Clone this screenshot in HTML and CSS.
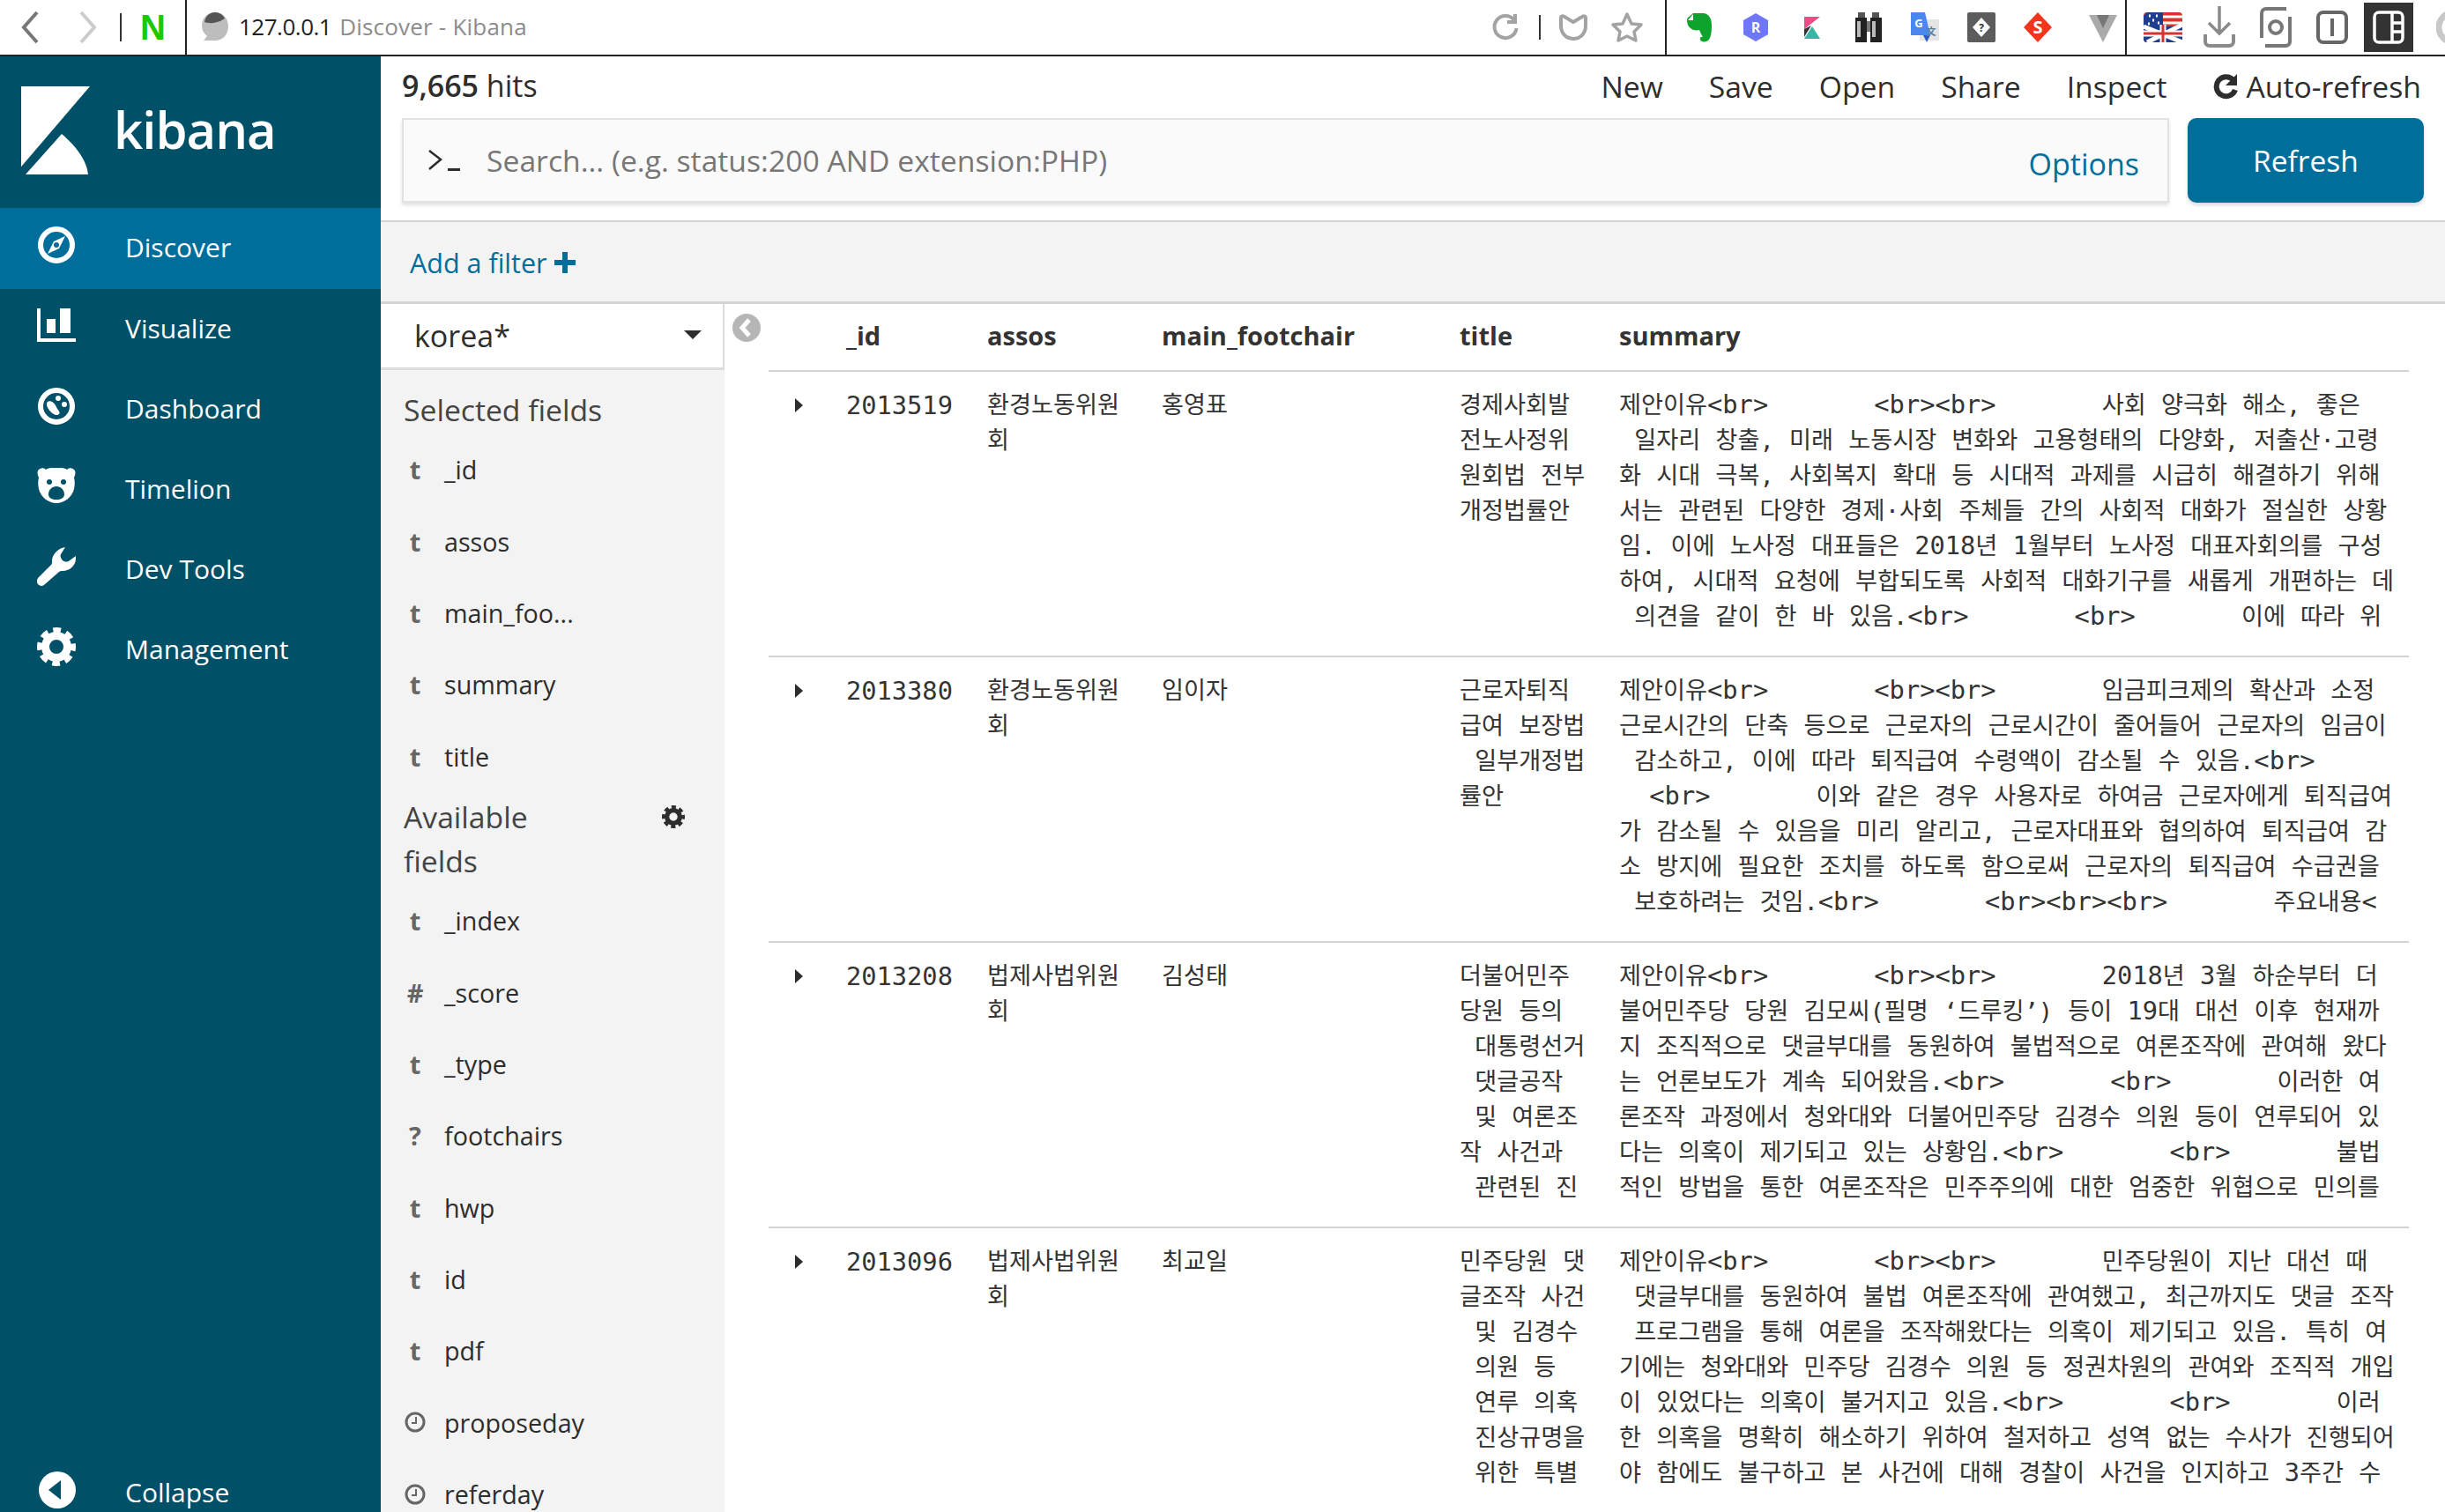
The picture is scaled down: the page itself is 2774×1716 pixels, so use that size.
FILE: index.html
```html
<!DOCTYPE html>
<html lang="en">
<head>
  <meta charset="UTF-8" />
  <title>Discover - Kibana</title>
  <link rel="stylesheet" href="styles.css">
</head>
<body>

<svg class="defs" width="0" height="0">
  <symbol id="gear" viewBox="0 0 44 44">
    <circle cx="22" cy="22" r="12.5" fill="none" stroke="currentColor" stroke-width="9"/>
    <circle cx="22" cy="22" r="18.5" fill="none" stroke="currentColor" stroke-width="7" stroke-dasharray="8.5 6" stroke-dashoffset="4"/>
  </symbol>
  <symbol id="clock" viewBox="0 0 24 24">
    <circle cx="12" cy="12" r="10" fill="none" stroke="currentColor" stroke-width="3"/>
    <path d="M13 6v7H8" fill="none" stroke="currentColor" stroke-width="2"/>
  </symbol>
</svg>

<!-- browser toolbar -->
<div class="toolbar">
  <div class="tb-nav">
    <svg class="tb-back" width="24" height="40" viewBox="0 0 24 40"><path d="M20 3L5 20l15 17" fill="none" stroke="#777" stroke-width="4"/></svg>
    <svg class="tb-fwd" width="24" height="40" viewBox="0 0 24 40"><path d="M4 3l15 17L4 37" fill="none" stroke="#ccc" stroke-width="4"/></svg>
    <span class="tb-sep"></span>
    <span class="tb-naver">N</span>
  </div>
  <div class="tb-tab">
    <svg width="34" height="34" viewBox="0 0 34 34"><path d="M17 1c9 0 15 7 15 16s-6 16-15 16H4l4-5C4 25 2 21 2 16 2 8 8 1 17 1z" fill="#bdbdbd"/><path d="M17 1C10 1 6 6 5 12c5 2 14 2 23-4-2-4-6-7-11-7z" fill="#555"/></svg>
    <span class="tb-host">127.0.0.1</span>
    <span class="tb-title">Discover - Kibana</span>
  </div>
  <div class="tb-actions">
    <svg width="36" height="36" viewBox="0 0 36 36"><path d="M28 10A12.5 12.5 0 1 0 30.500 19" fill="none" stroke="#a3a3a3" stroke-width="4"/><path d="M29 3v9h-9" fill="none" stroke="#a3a3a3" stroke-width="4"/></svg>
    <span class="tb-sep small"></span>
    <svg width="34" height="30" viewBox="0 0 34 30"><path d="M3 4c0-2 2-2 4-1l10 6 10-6c2-1 4-1 4 1v9c0 9-6 15-14 15S3 22 3 13z" fill="none" stroke="#a3a3a3" stroke-width="4" stroke-linejoin="round"/></svg>
    <svg class="tb-star" width="38" height="36" viewBox="0 0 38 36"><polygon points="19,3 24,14 35,15 27,23 29,33 19,28 9,33 11,23 3,15 14,14" fill="none" stroke="#a3a3a3" stroke-width="3.500" stroke-linejoin="round"/></svg>
  </div>
  <div class="tb-exts">
    <span class="slot"><svg width="30" height="34" viewBox="0 0 30 34"><path d="M8 1h12c6 1 9 6 9 14 0 8-1 14-4 17-3 2-8 2-9-1-1-2 1-4 3-3-2-3-3-6-4-8-4 1-8 0-10-2-3-2-4-6-4-9 0-1 0-2 1-3z" fill="#0da32c"/><path d="M8 2v7H2z" fill="#fff"/></svg></span>
    <span class="slot"><svg width="30" height="34" viewBox="0 0 30 34"><polygon points="15,1 29,9 29,25 15,33 1,25 1,9" fill="#6f76f8"/><text x="15" y="23" class="svg-label" fill="#fff" font-size="16">R</text></svg></span>
    <span class="slot"><svg width="20" height="26" viewBox="0 0 20 26"><polygon points="1,1 19,1 1,15" fill="#ec4b87"/><polygon points="1,15 9,11 1,24" fill="#333"/><polygon points="1,26 10,12 19,26" fill="#37b5a6"/></svg></span>
    <span class="slot"><svg width="32" height="34" viewBox="0 0 32 34"><rect x="1" y="6" width="13" height="28" fill="#222"/><rect x="18" y="6" width="13" height="28" fill="#222"/><rect x="4" y="0" width="8" height="6" fill="#555"/><rect x="20" y="0" width="8" height="6" fill="#555"/><rect x="3" y="10" width="4" height="18" fill="#bbb"/><rect x="20" y="10" width="4" height="18" fill="#bbb"/><rect x="14" y="10" width="4" height="12" fill="#777"/></svg></span>
    <span class="slot"><svg width="32" height="34" viewBox="0 0 32 34"><rect x="10" y="8" width="22" height="24" rx="1" fill="#e4e4e4"/><path d="M0 0h16l6 26H0z" fill="#4a87ee"/><polygon points="14,26 22,26 18,34" fill="#2b5fc0"/><text x="9" y="17" class="svg-label" fill="#fff" font-size="13">G</text><text x="23" y="26" class="svg-label" fill="#5a7f9a" font-size="11">文</text></svg></span>
    <span class="slot"><svg width="32" height="34" viewBox="0 0 32 34"><rect width="32" height="34" rx="2" fill="#5c5c5c"/><polygon points="16,6 26,17 16,28 6,17" fill="#fff"/><text x="16" y="22" class="svg-label" fill="#333" font-size="12">?</text></svg></span>
    <span class="slot"><svg width="32" height="34" viewBox="0 0 32 34"><polygon points="16,0 32,17 16,34 0,17" fill="#f2351d"/><text x="16" y="24" class="svg-label" fill="#fff" font-size="20">S</text></svg></span>
    <span class="slot"><svg width="32" height="34" viewBox="0 0 32 34"><polygon points="0,3 32,3 16,34" fill="#aaa"/><polygon points="9,3 23,3 16,18" fill="#777"/></svg></span>
  </div>
  <div class="tb-tools">
    <span class="slot"><svg width="44" height="34" viewBox="0 0 44 34"><rect width="44" height="34" rx="4" fill="#d8332e"/><path d="M20 5h24M20 12h24" stroke="#fff" stroke-width="3"/><path d="M4 0h18v16H0V4z" fill="#1e3d8f"/><path d="M6 4h2M14 4h2M10 9h2M5 13h2M16 12h2" stroke="#fff" stroke-width="3"/><path d="M0 16h44v14q0 4-4 4H4q-4 0-4-4z" fill="#1e3d8f"/><path d="M44 14L4 34M0 16l44 18" stroke="#fff" stroke-width="5"/><path d="M22 14v20M0 24h44" stroke="#fff" stroke-width="7"/><path d="M22 14v20M0 24h44" stroke="#d8332e" stroke-width="3"/></svg></span>
    <span class="slot"><svg width="36" height="48" viewBox="0 0 36 48"><path d="M18 0v30M6 19l12 12 12-12" fill="none" stroke="#8a8a8a" stroke-width="3.500"/><path d="M2 32v8c0 3 2 5 5 5h22c3 0 5-2 5-5v-8" fill="none" stroke="#8a8a8a" stroke-width="4"/></svg></span>
    <span class="slot"><svg width="36" height="48" viewBox="0 0 36 48"><path d="M2 36V8c0-3 2-5 5-5h23M34 12v28c0 3-2 5-5 5H6" fill="none" stroke="#777" stroke-width="4"/><circle cx="18" cy="24" r="7" fill="none" stroke="#777" stroke-width="4"/></svg></span>
    <span class="slot"><svg width="36" height="38" viewBox="0 0 36 38"><rect x="2" y="2" width="32" height="34" rx="6" fill="none" stroke="#666" stroke-width="4"/><rect x="16" y="9" width="4" height="20" fill="#666"/></svg></span>
    <span class="slot slot-dark"><svg width="36" height="38" viewBox="0 0 36 38"><rect x="2" y="2" width="32" height="34" rx="5" fill="none" stroke="#fff" stroke-width="3.500"/><path d="M22 2v34M22 14h12M22 24h12" stroke="#fff" stroke-width="3.500"/></svg></span>
    <span class="slot"><svg width="40" height="40" viewBox="0 0 40 40"><circle cx="20" cy="20" r="17" fill="none" stroke="#c8c8c8" stroke-width="7"/></svg></span>
  </div>
</div>

<div class="app">

  <!-- kibana nav -->
  <nav class="sidenav">
    <div class="brand">
      <svg width="80" height="102" viewBox="0 0 80 102"><polygon points="0,0 78,0 0,152" class="logo-top" transform="translate(0 0) scale(1 .6)"/><path d="M5 100L46 54c14 12 28 28 30 46z" fill="#fff"/></svg>
      <span class="brand-name">kibana</span>
    </div>
    <a class="nav-item active">
      <svg class="nav-icon" viewBox="0 0 44 44"><circle cx="22" cy="22" r="18" fill="none" stroke="#fff" stroke-width="6"/><polygon points="32,12 25,26 12,32 19,18" fill="#fff"/><circle cx="22" cy="22" r="3" fill="#006e9b"/></svg>
      <span>Discover</span>
    </a>
    <a class="nav-item">
      <svg class="nav-icon" viewBox="0 0 44 44"><path d="M0 2h4v34h40v4H0z" fill="#fff"/><rect x="11" y="14" width="10" height="16" fill="#fff"/><rect x="26" y="2" width="12" height="28" fill="#fff"/></svg>
      <span>Visualize</span>
    </a>
    <a class="nav-item">
      <svg class="nav-icon" viewBox="0 0 44 44"><circle cx="22" cy="22" r="18" fill="none" stroke="#fff" stroke-width="6"/><path d="M12 17c3-2 8 1 10 6 2 4 5 6 3 8-3 3-9-1-12-6-2-3-3-6-1-8z" fill="#fff"/><circle cx="24" cy="13" r="3" fill="#fff"/><circle cx="31" cy="20" r="3" fill="#fff"/></svg>
      <span>Dashboard</span>
    </a>
    <a class="nav-item">
      <svg class="nav-icon" viewBox="0 0 44 44"><path fill-rule="evenodd" d="M1 4c2-3 7-4 9-1 3-2 5-2 12-2s9 0 12 2c2-3 7-2 9 1 1 3 0 6-1 8 1 4 1 8 0 13-2 9-11 16-20 16S4 34 2 25C1 20 1 16 2 12 1 10 0 7 1 4zM14 14a3 3 0 1 0 0 6 3 3 0 0 0 0-6zm16 0a3 3 0 1 0 0 6 3 3 0 0 0 0-6zM22 22c-5 0-9 4-9 9 0 4 4 6 9 6s9-2 9-6c0-5-4-9-9-9z" fill="#fff"/><path d="M18 17h8l-4 5z" fill="#fff"/></svg>
      <span>Timelion</span>
    </a>
    <a class="nav-item">
      <svg class="nav-icon tall" viewBox="0 0 44 44"><path d="M44 10c1 9-5 17-15 17-2 0-3 0-4 1L9 42c-3 3-6 2-8 0-2-3-1-6 1-8l14-14c1-1 1-2 1-4 0-8 7-15 15-16l-5 8c-1 2 0 5 2 7 3 2 6 2 8 0z" fill="#fff"/></svg>
      <span>Dev Tools</span>
    </a>
    <a class="nav-item">
      <svg class="nav-icon white"><use href="#gear"/></svg>
      <span>Management</span>
    </a>
    <a class="nav-item collapse">
      <svg class="nav-icon" viewBox="0 0 44 44"><circle cx="23" cy="22" r="21" fill="#fff"/><polygon points="27,11 27,33 13,22" fill="#005068"/></svg>
      <span>Collapse</span>
    </a>
  </nav>

  <main class="main">
    <div class="topbar">
      <div class="top-row">
        <div class="hits"><strong>9,665</strong> hits</div>
        <div class="top-links">
          <a>New</a>
          <a>Save</a>
          <a>Open</a>
          <a>Share</a>
          <a>Inspect</a>
          <a class="auto-refresh"><svg width="28" height="30" viewBox="0 0 28 30"><path d="M23 8A11 11 0 1 0 25 19" fill="none" stroke="#2d2d2d" stroke-width="6"/><polygon points="27,1 27,14 14,14" fill="#2d2d2d"/></svg>Auto-refresh</a>
        </div>
      </div>
      <div class="search-row">
        <div class="search">
          <svg width="38" height="26" viewBox="0 0 38 26"><path d="M1 2l13 10L1 23" fill="none" stroke="#2d2d2d" stroke-width="2.500"/><rect x="22" y="22" width="14" height="3" fill="#2d2d2d"/></svg>
          <span class="search-text">Search... (e.g. status:200 AND extension:PHP)</span>
          <a class="options">Options</a>
        </div>
        <button class="refresh">Refresh</button>
      </div>
    </div>

    <div class="filterbar">
      <a class="add-filter">Add a filter<svg width="24" height="24" viewBox="0 0 24 24"><path d="M9 0h6v9h9v6h-9v9H9v-9H0V9h9z" fill="#006e9b"/></svg></a>
    </div>

    <div class="content">
      <aside class="fields">
        <div class="index-select">korea*<span class="select-caret"></span></div>
        <h3 class="field-title">Selected fields</h3>
        <ul class="field-list">
          <li><span class="ftype">t</span>_id</li>
          <li><span class="ftype">t</span>assos</li>
          <li><span class="ftype">t</span>main_foo...</li>
          <li><span class="ftype">t</span>summary</li>
          <li><span class="ftype">t</span>title</li>
        </ul>
        <div class="avail-head">
          <h3 class="field-title avail">Available fields</h3>
          <svg class="avail-gear"><use href="#gear"/></svg>
        </div>
        <ul class="field-list">
          <li><span class="ftype">t</span>_index</li>
          <li><span class="ftype">#</span>_score</li>
          <li><span class="ftype">t</span>_type</li>
          <li><span class="ftype">?</span>footchairs</li>
          <li><span class="ftype">t</span>hwp</li>
          <li><span class="ftype">t</span>id</li>
          <li><span class="ftype">t</span>pdf</li>
          <li><span class="ftype"><svg class="clock"><use href="#clock"/></svg></span>proposeday</li>
          <li><span class="ftype"><svg class="clock"><use href="#clock"/></svg></span>referday</li>
        </ul>
      </aside>

      <div class="hide-col">
        <svg width="32" height="32" viewBox="0 0 32 32"><circle cx="16" cy="16" r="16" fill="#b6b6b6"/><path d="M19 7l-8 9 8 9" fill="none" stroke="#fff" stroke-width="5"/></svg>
      </div>

      <table class="docs">
        <colgroup>
          <col class="c-exp"><col class="c-id"><col class="c-assos"><col class="c-chair"><col class="c-title"><col class="c-sum">
        </colgroup>
        <thead>
          <tr><th></th><th>_id</th><th>assos</th><th>main_footchair</th><th>title</th><th>summary</th></tr>
        </thead>
        <tbody>
          <tr>
            <td><span class="row-caret"></span></td>
            <td class="doc-id">2013519</td>
            <td>환경노동위원
회</td>
            <td>홍영표</td>
            <td>경제사회발
전노사정위
원회법 전부
개정법률안</td>
            <td class="summary">
              <div>제안이유<b>&lt;br&gt;</b>       <b>&lt;br&gt;&lt;br&gt;</b>       사회 양극화 해소, 좋은</div>
              <div> 일자리 창출, 미래 노동시장 변화와 고용형태의 다양화, 저출산·고령</div>
              <div>화 시대 극복, 사회복지 확대 등 시대적 과제를 시급히 해결하기 위해</div>
              <div>서는 관련된 다양한 경제·사회 주체들 간의 사회적 대화가 절실한 상황</div>
              <div>임. 이에 노사정 대표들은 <b>2018</b>년 <b>1</b>월부터 노사정 대표자회의를 구성</div>
              <div>하여, 시대적 요청에 부합되도록 사회적 대화기구를 새롭게 개편하는 데</div>
              <div> 의견을 같이 한 바 있음.<b>&lt;br&gt;</b>       <b>&lt;br&gt;</b>       이에 따라 위</div>
            </td>
          </tr>
          <tr>
            <td><span class="row-caret"></span></td>
            <td class="doc-id">2013380</td>
            <td>환경노동위원
회</td>
            <td>임이자</td>
            <td>근로자퇴직
급여 보장법
 일부개정법
률안</td>
            <td class="summary">
              <div>제안이유<b>&lt;br&gt;</b>       <b>&lt;br&gt;&lt;br&gt;</b>       임금피크제의 확산과 소정</div>
              <div>근로시간의 단축 등으로 근로자의 근로시간이 줄어들어 근로자의 임금이</div>
              <div> 감소하고, 이에 따라 퇴직급여 수령액이 감소될 수 있음.<b>&lt;br&gt;</b></div>
              <div>  <b>&lt;br&gt;</b>       이와 같은 경우 사용자로 하여금 근로자에게 퇴직급여</div>
              <div>가 감소될 수 있음을 미리 알리고, 근로자대표와 협의하여 퇴직급여 감</div>
              <div>소 방지에 필요한 조치를 하도록 함으로써 근로자의 퇴직급여 수급권을</div>
              <div> 보호하려는 것임.<b>&lt;br&gt;</b>       <b>&lt;br&gt;&lt;br&gt;&lt;br&gt;</b>       주요내용<b>&lt;</b></div>
            </td>
          </tr>
          <tr>
            <td><span class="row-caret"></span></td>
            <td class="doc-id">2013208</td>
            <td>법제사법위원
회</td>
            <td>김성태</td>
            <td>더불어민주
당원 등의
 대통령선거
 댓글공작
 및 여론조
작 사건과
 관련된 진</td>
            <td class="summary">
              <div>제안이유<b>&lt;br&gt;</b>       <b>&lt;br&gt;&lt;br&gt;</b>       <b>2018</b>년 <b>3</b>월 하순부터 더</div>
              <div>불어민주당 당원 김모씨(필명 ‘드루킹’) 등이 <b>19</b>대 대선 이후 현재까</div>
              <div>지 조직적으로 댓글부대를 동원하여 불법적으로 여론조작에 관여해 왔다</div>
              <div>는 언론보도가 계속 되어왔음.<b>&lt;br&gt;</b>       <b>&lt;br&gt;</b>       이러한 여</div>
              <div>론조작 과정에서 청와대와 더불어민주당 김경수 의원 등이 연루되어 있</div>
              <div>다는 의혹이 제기되고 있는 상황임.<b>&lt;br&gt;</b>       <b>&lt;br&gt;</b>       불법</div>
              <div>적인 방법을 통한 여론조작은 민주주의에 대한 엄중한 위협으로 민의를</div>
            </td>
          </tr>
          <tr>
            <td><span class="row-caret"></span></td>
            <td class="doc-id">2013096</td>
            <td>법제사법위원
회</td>
            <td>최교일</td>
            <td>민주당원 댓
글조작 사건
 및 김경수
 의원 등
 연루 의혹
 진상규명을
 위한 특별</td>
            <td class="summary">
              <div>제안이유<b>&lt;br&gt;</b>       <b>&lt;br&gt;&lt;br&gt;</b>       민주당원이 지난 대선 때</div>
              <div> 댓글부대를 동원하여 불법 여론조작에 관여했고, 최근까지도 댓글 조작</div>
              <div> 프로그램을 통해 여론을 조작해왔다는 의혹이 제기되고 있음. 특히 여</div>
              <div>기에는 청와대와 민주당 김경수 의원 등 정권차원의 관여와 조직적 개입</div>
              <div>이 있었다는 의혹이 불거지고 있음.<b>&lt;br&gt;</b>       <b>&lt;br&gt;</b>       이러</div>
              <div>한 의혹을 명확히 해소하기 위하여 철저하고 성역 없는 수사가 진행되어</div>
              <div>야 함에도 불구하고 본 사건에 대해 경찰이 사건을 인지하고 <b>3</b>주간 수</div>
            </td>
          </tr>
        </tbody>
      </table>
    </div>
  </main>
</div>

</body>
</html>
```

FILE: styles.css
```css
* { box-sizing: border-box; }

html, body {
  height: 1716px;
  overflow: hidden;
}

body {
  margin: 0;
  font-family: "Open Sans", sans-serif;
  color: #2d2d2d;
  background: white;
}

.defs {
  display: block;
  height: 0;
}

/* Browser toolbar */
.toolbar {
  display: flex;
  height: 64px;
  border-bottom: 2px solid #222;
  align-items: stretch;
  background: white;
}

.tb-nav {
  display: flex;
  align-items: center;
  width: 212px;
  border-right: 2px solid #222;
  padding-left: 22px;
}

.tb-fwd {
  margin-left: 42px;
}

.tb-sep {
  display: block;
  width: 2px;
  height: 32px;
  background: #333;
  margin-left: 24px;
}

.tb-sep.small {
  height: 28px;
  margin: 0;
}

.tb-naver {
  font-family: "Liberation Sans", sans-serif;
  font-weight: bold;
  font-size: 40px;
  color: #1ec800;
  margin-left: 21px;
}

.tb-tab {
  display: flex;
  align-items: center;
  padding: 0 0 2px 15px;
  font-size: 26px;
}

.tb-host {
  margin-left: 10px;
  color: #222;
  letter-spacing: -0.5px;
}

.tb-title {
  margin-left: 9px;
  color: #8c8c8c;
  letter-spacing: 0.2px;
}

.tb-actions {
  display: flex;
  align-items: center;
  gap: 20px;
  margin-left: auto;
  width: 199px;
}

.tb-star {
  margin-left: 5px;
}

.tb-exts {
  display: flex;
  align-items: center;
  width: 522px;
  padding: 0 5px;
  border-left: 2px solid #222;
}

.tb-tools {
  display: flex;
  align-items: center;
  width: 363px;
  padding-left: 9px;
  border-left: 2px solid #222;
  overflow: hidden;
}

.slot {
  display: flex;
  flex: none;
  align-items: center;
  justify-content: center;
  width: 64px;
  height: 56px;
}

.slot-dark {
  width: 56px;
  margin: 0 4px;
  background: #333;
}

.slot:last-child {
  margin-left: 10px;
}

.svg-label {
  font-family: "Open Sans", "Noto Sans CJK SC", sans-serif;
  font-weight: bold;
  text-anchor: middle;
}

/* Layout */
.app {
  display: flex;
  height: 1652px;
}

/* Kibana nav */
.sidenav {
  display: flex;
  flex-direction: column;
  flex: none;
  width: 432px;
  background: #005068;
  color: white;
}

.brand {
  display: flex;
  height: 172px;
  padding: 34px 0 0 24px;
}

.logo-top {
  fill: white;
}

.brand-name {
  margin: 4px 0 0 25px;
  font-size: 58px;
  font-weight: 600;
  letter-spacing: -1px;
  line-height: 90px;
}

.nav-item {
  display: flex;
  align-items: center;
  height: 91px;
  padding-left: 42px;
  font-size: 30px;
}

.nav-item.active {
  height: 92px;
  background: #006e9b;
}

.nav-item span {
  margin: 0 0 3px 56px;
}

.nav-icon {
  flex: none;
  width: 44px;
  height: 44px;
  margin-top: -8px;
}

.nav-icon.white {
  color: white;
}

.nav-item.collapse {
  height: 42px;
  margin-top: auto;
}

/* Top bar */
.main {
  flex: 1;
  min-width: 0;
  display: flex;
  flex-direction: column;
}

.topbar {
  height: 188px;
  padding: 0 24px;
  border-bottom: 2px solid #d4d4d4;
}

.top-row {
  display: flex;
  justify-content: space-between;
  align-items: center;
  height: 66px;
  margin-bottom: 4px;
}

.hits {
  font-size: 34px;
}

.hits strong {
  font-weight: 600;
}

.top-links {
  display: flex;
  gap: 52px;
  margin: 2px 3px 0 0;
  font-size: 33.7px;
}

.auto-refresh {
  display: flex;
  align-items: center;
  gap: 10px;
}

.search-row {
  display: flex;
  gap: 21px;
  height: 96px;
}

.search {
  flex: 1;
  display: flex;
  align-items: center;
  padding: 0 32px 0 28px;
  background: #fafafa;
  border: 2px solid #e2e2e2;
  box-shadow: 0 3px 4px rgba(0,0,0,0.12);
}

.search-text {
  margin-left: 28px;
  font-size: 33.7px;
  color: #777;
}

.options {
  margin-left: auto;
  margin-top: 8px;
  font-size: 34px;
  color: #006e9b;
}

.refresh {
  flex: none;
  width: 268px;
  border: none;
  border-radius: 10px;
  background: #006e9b;
  color: white;
  font-family: inherit;
  font-size: 33.5px;
  box-shadow: 0 3px 4px rgba(0,0,0,0.15);
}

/* Filter bar */
.filterbar {
  display: flex;
  align-items: center;
  height: 93px;
  padding-left: 33px;
  background: #f3f3f3;
  border-bottom: 3px solid #d4d4d4;
}

.add-filter {
  display: flex;
  align-items: center;
  gap: 8px;
  margin-top: 2px;
  font-size: 30.5px;
  color: #006e9b;
}

/* Field list */
.content {
  flex: 1;
  display: flex;
  min-height: 0;
}

.fields {
  flex: none;
  width: 390px;
  background: #f3f3f3;
}

.index-select {
  display: flex;
  align-items: center;
  justify-content: space-between;
  height: 75px;
  padding: 0 24px 0 38px;
  background: white;
  border-bottom: 3px solid #ddd;
  border-right: 2px solid #ddd;
  font-size: 34px;
}

.select-caret {
  width: 0;
  height: 0;
  margin-top: -2px;
  border-left: 10px solid transparent;
  border-right: 10px solid transparent;
  border-top: 10px solid #2d2d2d;
}

.field-title {
  margin: 0;
  padding: 25px 0 7px 26px;
  font-size: 33.7px;
  font-weight: normal;
  line-height: 40px;
  color: #444;
}

.field-list {
  list-style: none;
  margin: 0;
  padding: 0;
}

.field-list li {
  display: flex;
  align-items: center;
  height: 81.4px;
  padding-left: 27px;
  font-size: 28.7px;
  white-space: nowrap;
}

.ftype {
  display: flex;
  justify-content: center;
  width: 24px;
  margin-right: 21px;
  font-size: 29px;
  font-weight: bold;
  color: #666;
}

.clock {
  width: 24px;
  height: 24px;
  color: #666;
}

.avail-head {
  display: flex;
  align-items: flex-start;
  justify-content: space-between;
  padding-right: 45px;
}

.field-title.avail {
  width: 220px;
  padding: 3px 0 1px 26px;
  line-height: 50.5px;
}

.avail-gear {
  flex: none;
  width: 26px;
  height: 26px;
  margin-top: 15px;
  color: #2d2d2d;
}

.hide-col {
  flex: none;
  width: 50px;
  padding: 11px 0 0 9px;
}

/* Documents table */
.docs {
  flex: none;
  width: 1861px;
  height: 0;
  table-layout: fixed;
  border-collapse: separate;
  border-spacing: 0;
  font-family: "DejaVu Sans Mono", "Noto Sans CJK KR", monospace;
  font-size: 27.2px;
  word-spacing: 0.8px;
  line-height: 40px;
  color: #333;
}

.c-exp { width: 88px; }
.c-id { width: 160px; }
.c-assos { width: 198px; }
.c-chair { width: 338px; }
.c-title { width: 181px; }
.c-sum { width: 896px; }

.docs th {
  height: 77px;
  padding: 0 0 3px;
  font-family: "Open Sans", sans-serif;
  font-size: 29px;
  font-weight: bold;
  text-align: left;
  word-spacing: 0;
  border-bottom: 2px solid #d4d4d4;
}

.docs td {
  height: 324px;
  padding: 18px 0 24px;
  vertical-align: top;
  white-space: pre;
  border-bottom: 2px solid #d4d4d4;
}

.docs .summary {
  white-space: normal;
}

.summary div {
  white-space: pre;
}

/* latin runs in the mono font are set a bit larger than the hangul */
.docs td b {
  font-size: 28.7px;
  font-weight: normal;
  line-height: 1;
}

.docs .doc-id {
  font-size: 28.7px;
}

.row-caret {
  display: block;
  width: 0;
  height: 0;
  margin: 12px 0 0 30px;
  border-left: 9px solid #2d2d2d;
  border-top: 8px solid transparent;
  border-bottom: 8px solid transparent;
}
```
